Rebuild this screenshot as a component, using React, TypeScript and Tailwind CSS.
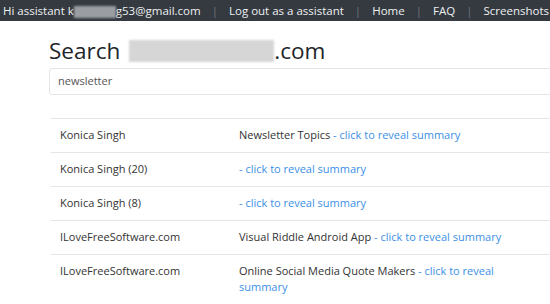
const rows = [
  { source: 'Konica Singh', title: 'Newsletter Topics' },
  { source: 'Konica Singh (20)', title: '' },
  { source: 'Konica Singh (8)', title: '' },
  { source: 'ILoveFreeSoftware.com', title: 'Visual Riddle Android App' },
  { source: 'ILoveFreeSoftware.com', title: 'Online Social Media Quote Makers' },
];

const Sep = () => <span className="px-[11px] text-[#6c757d]">|</span>;

export default function App() {
  return (
    <div className="w-[550px] h-[304px] overflow-hidden bg-white font-['Open_Sans',sans-serif] text-[#212529]">
      <nav className="h-[21px] bg-[#343a40] flex items-center pl-[3px] whitespace-nowrap text-[11.5px] text-[#eef0f2]">
        <span>
          Hi assistant k
          <span className="inline-block w-[42px] h-[12px] align-middle bg-[#9a9ea3] blur-[1px]" />
          g53@gmail.com
        </span>
        <Sep />
        <span>Log out as a assistant</span>
        <Sep />
        <span>Home</span>
        <Sep />
        <span>FAQ</span>
        <Sep />
        <span>Screenshots</span>
      </nav>

      <div className="pl-[49px] w-[620px]">
        <h1 className="mt-[15px] h-[30px] flex items-center text-[22.5px] leading-none">
          <span>Search</span>
          <span className="ml-[9px] inline-block w-[145px] h-[22px] bg-[#d6d6d6] blur-[1px]" />
          <span>.com</span>
        </h1>

        <div className="mt-[2px] h-[27px] border border-[#e2e4e6] rounded-[3px] flex items-center pl-[8px] text-[11px] text-[#555]">
          newsletter
        </div>

        <table className="mt-[23px] ml-[2px] w-[560px] border-collapse text-[11px] text-[#333]">
          <tbody>
            {rows.map((r, i) => (
              <tr key={i} className="border-t border-b border-[#e6e6e6] align-top">
                <td className="w-[178px] pl-[9px] pt-[8px] pb-[9px] leading-[16px]">{r.source}</td>
                <td className="pl-[10px] pt-[8px] pb-[9px] leading-[16px]">
                  <div className="w-[282px]">
                    {r.title ? r.title + ' ' : ''}
                    <span className="text-[#3c8fe6]">- click to reveal summary</span>
                  </div>
                </td>
              </tr>
            ))}
          </tbody>
        </table>
      </div>
    </div>
  );
}
